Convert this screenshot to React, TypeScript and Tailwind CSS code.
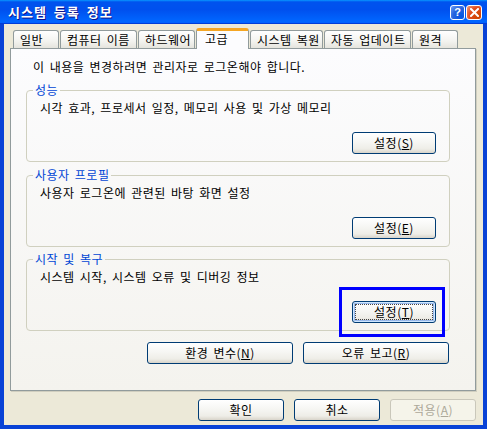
import type { ReactNode } from "react";

const tabs = [
  { label: "일반", w: "w-[46px]" },
  { label: "컴퓨터 이름", w: "w-[77px]" },
  { label: "하드웨어", w: "w-[57px]" },
  { label: "고급", w: "w-[53px]", active: true },
  { label: "시스템 복원", w: "w-[73px]" },
  { label: "자동 업데이트", w: "w-[87px]" },
  { label: "원격", w: "w-[46px]" },
];

function XPButton({
  children,
  className = "",
  focused = false,
  disabled = false,
}: {
  children: ReactNode;
  className?: string;
  focused?: boolean;
  disabled?: boolean;
}) {
  if (disabled) {
    return (
      <div
        className={`h-[22px] rounded-[3px] border border-[#c9c7ba] bg-[#f5f4ea] text-[#aca899] flex items-center justify-center ${className}`}
      >
        {children}
      </div>
    );
  }
  return (
    <div
      className={`h-[22px] rounded-[3px] border border-[#003c74] bg-[linear-gradient(180deg,#ffffff_0%,#f6f6f3_45%,#eeede7_80%,#d8d4ca_100%)] flex items-center justify-center p-[3px] ${
        focused ? "shadow-[inset_0_0_0_1px_#cee7ff,inset_0_0_0_2px_#98b8ea]" : ""
      } ${className}`}
    >
      <span
        className={`w-full h-full flex items-center justify-center ${
          focused ? "outline outline-1 outline-dotted outline-[#444]" : ""
        }`}
      >
        {children}
      </span>
    </div>
  );
}

function GroupBox({
  title,
  text,
  button,
  focused = false,
  className = "",
}: {
  title: string;
  text: string;
  button: ReactNode;
  focused?: boolean;
  className?: string;
}) {
  return (
    <fieldset
      className={`w-[424px] border border-[#d0d0bf] rounded-[4px] ${className}`}
    >
      <legend className="ml-[6px] px-[2px] leading-[14px] text-[#0046d5]">
        {title}
      </legend>
      <div className="px-[13px] pt-[4px] pb-[7px]">
        <div className="leading-[14px]">{text}</div>
        <div className="flex justify-end mt-[17px]">
          <XPButton className="w-[84px]" focused={focused}>
            {button}
          </XPButton>
        </div>
      </div>
    </fieldset>
  );
}

export default function App() {
  return (
    <div className="relative w-[487px] h-[429px] flex flex-col bg-[#0842d6] text-[12px] text-black tracking-[0.5px] [word-spacing:2px] font-['Noto_Sans_CJK_KR','Liberation_Sans',sans-serif] select-none">
      {/* title bar */}
      <div className="h-[24px] shrink-0 flex items-center pl-[8px] pr-[5px] bg-[linear-gradient(180deg,#0997ff,#0053ee_8%,#0050ee_40%,#06f_88%,#06f_93%,#005bff_95%,#003dd7_96%,#003dd7)]">
        <span className="text-white font-bold text-[13px] [text-shadow:1px_1px_#0f1089] tracking-[1px] [word-spacing:3px]">
          시스템 등록 정보
        </span>
        <div className="ml-auto flex gap-[1px] mt-[1px]">
          <div className="w-[15px] h-[15px] rounded-[3px] border border-white bg-[radial-gradient(circle_at_80%_80%,#0054e3,#2663de_55%,#73a0f5)] flex items-center justify-center text-white text-[11px] font-bold leading-none tracking-normal font-['Liberation_Sans',sans-serif]">
            ?
          </div>
          <div className="w-[16px] h-[15px] rounded-[3px] border border-white bg-[radial-gradient(circle_at_80%_80%,#cc4600,#e04a1c_55%,#f0a080)] flex items-center justify-center">
            <svg width="9" height="9" viewBox="0 0 9 9">
              <path d="M1 1 L8 8 M8 1 L1 8" stroke="white" strokeWidth="2" strokeLinecap="square" />
            </svg>
          </div>
        </div>
      </div>

      {/* client */}
      <div className="flex-1 mx-[4px] mb-[4px] bg-[#ece9d8] flex flex-col">
        {/* tabs */}
        <div className="h-[20px] mt-[4px] pl-[8px] flex items-end relative z-10">
          {tabs.map((t) =>
            t.active ? (
              <div
                key={t.label}
                className={`${t.w} ml-[1px] h-[21px] -mb-[1px] rounded-t-[3px] border border-b-0 border-[#919b9c] border-t-[3px] border-t-[#f5a623] bg-[#fcfcfe] pl-[8px] leading-[16px]`}
              >
                {t.label}
              </div>
            ) : (
              <div
                key={t.label}
                className={`${t.w} ml-[1px] h-[18px] rounded-t-[3px] border border-b-0 border-[#919b9c] bg-[linear-gradient(180deg,#ffffff,#f3f3ef_60%,#e5e4dd)] pl-[6px] leading-[17px] whitespace-nowrap`}
              >
                {t.label}
              </div>
            )
          )}
        </div>

        {/* tab page */}
        <div className="ml-[6px] w-[466px] h-[343px] border border-[#919b9c] bg-[linear-gradient(180deg,#fcfcfe,#f4f3ee)] px-[15px] pt-[11px] shadow-[1px_1px_0_#d0cebf]">
          <div className="ml-[7px] leading-[14px]">
            이 내용을 변경하려면 관리자로 로그온해야 합니다.
          </div>
          <GroupBox
            className="mt-[9px]"
            title="성능"
            text="시각 효과, 프로세서 일정, 메모리 사용 및 가상 메모리"
            button={
              <>
                설정(<u>S</u>)
              </>
            }
          />
          <GroupBox
            className="mt-[6px]"
            title="사용자 프로필"
            text="사용자 로그온에 관련된 바탕 화면 설정"
            button={
              <>
                설정(<u>E</u>)
              </>
            }
          />
          <GroupBox
            className="mt-[5px]"
            title="시작 및 복구"
            text="시스템 시작, 시스템 오류 및 디버깅 정보"
            focused
            button={
              <>
                설정(<u>T</u>)
              </>
            }
          />
          <div className="w-[423px] mt-[11px] flex justify-end gap-[10px]">
            <XPButton className="w-[146px]">
              환경 변수(<u>N</u>)
            </XPButton>
            <XPButton className="w-[146px]">
              오류 보고(<u>R</u>)
            </XPButton>
          </div>
        </div>

        {/* dialog buttons */}
        <div className="mt-auto mb-[4px] pr-[7px] flex justify-end gap-[10px]">
          <XPButton className="w-[86px]">확인</XPButton>
          <XPButton className="w-[86px]">취소</XPButton>
          <XPButton className="w-[86px]" disabled>
            적용(<u>A</u>)
          </XPButton>
        </div>
      </div>

      {/* annotation */}
      <div className="absolute left-[339px] top-[287px] w-[106px] h-[50px] border-[3px] border-[#0000ff] pointer-events-none" />
    </div>
  );
}
